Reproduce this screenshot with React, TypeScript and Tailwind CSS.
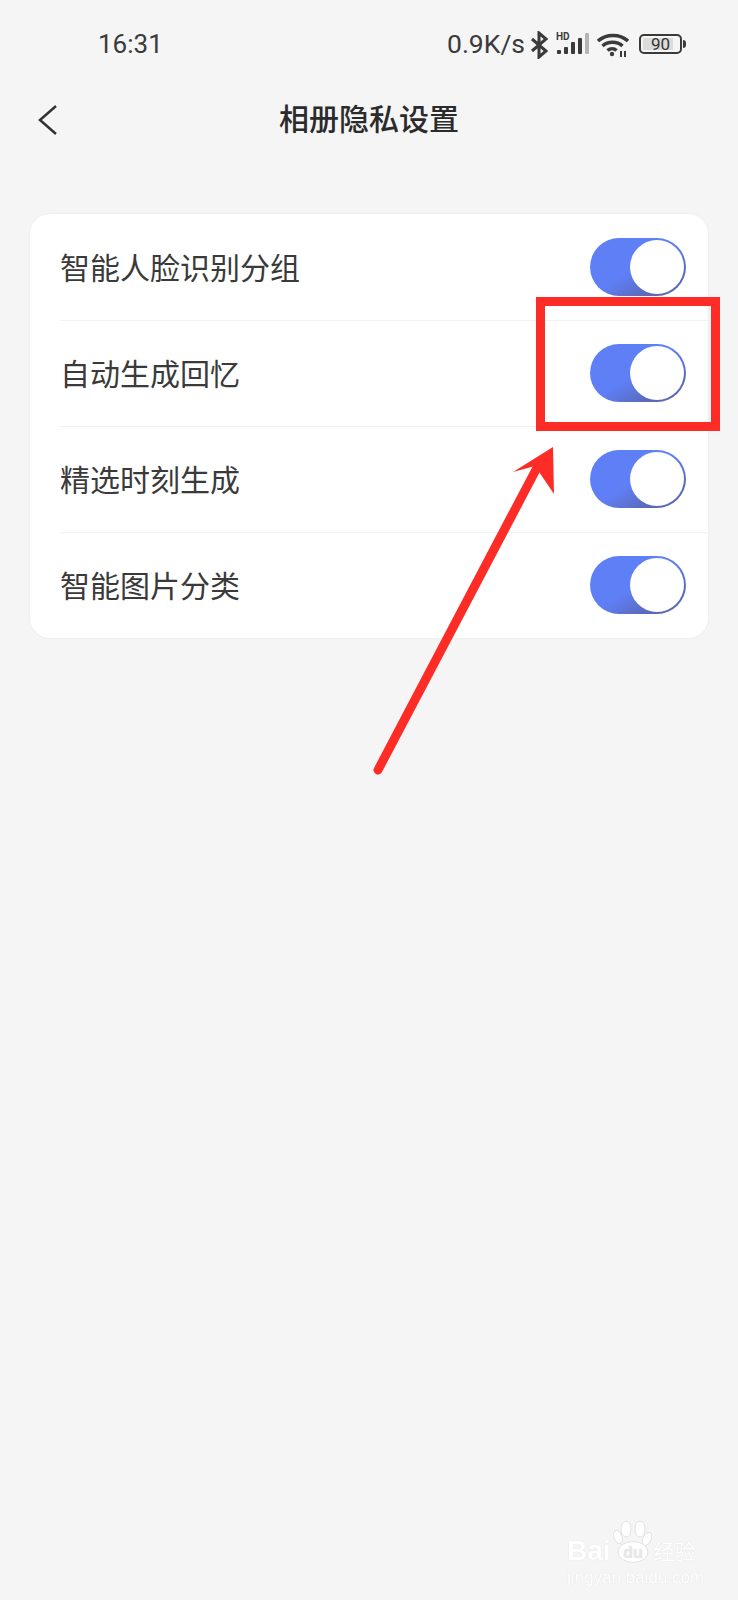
function StatusIcons() {
  return (
    <div className="flex items-center">
      <svg width="18" height="28" viewBox="0 0 18 28" fill="none" stroke="#3a3a3a" strokeWidth="3" className="ml-[5px] mt-[2px]">
        <path d="M2 8l14 12-7 6V2l7 6L2 20" />
      </svg>
      <svg width="33" height="24" viewBox="0 0 33 24" className="ml-[8px]" fill="#3a3a3a">
        <text x="0" y="8" fontSize="10" fontWeight="700" fontFamily="Roboto, sans-serif">HD</text>
        <rect x="1" y="18" width="4" height="4" rx="1" />
        <rect x="8" y="15" width="4" height="7" rx="1" />
        <rect x="15" y="10" width="4" height="12" rx="1" />
        <rect x="22" y="6" width="4" height="16" rx="1" />
        <rect x="29" y="1" width="4" height="21" rx="1" fill="#b5b5b5" />
      </svg>
      <svg width="32" height="24" viewBox="0 0 32 24" className="ml-[8px] mt-[2px]" fill="none" stroke="#3a3a3a" strokeWidth="3.5">
        <path d="M1 8C9 0.500 23 0.500 31 8" />
        <path d="M5.500 13C11 8 20 8 25.500 13" />
        <path d="M10.500 17.500c2.800-2.500 6.500-2.500 9 0" />
        <circle cx="15" cy="21" r="2.200" fill="#3a3a3a" stroke="none" />
        <path d="M24 18v6M28 18v6" strokeWidth="2" />
      </svg>
      <div className="ml-[10px] flex items-center">
        <div className="flex h-[20px] w-[43px] items-center rounded-[5px] border-2 border-[#3a3a3a] p-[2px]">
          <div className="flex h-full w-[30px] items-center justify-center bg-[#dcdcdc] pl-[5px] text-[17px] leading-none text-[#333]">90</div>
        </div>
        <div className="ml-[1px] h-[8px] w-[3px] rounded-r bg-[#3a3a3a]" />
      </div>
    </div>
  );
}

function Toggle() {
  return (
    <div className="mb-[1px] flex h-[58px] w-[96px] items-center justify-end rounded-full bg-gradient-to-br from-[#5f7ff7] from-50% to-[#5a69b8] to-80% pr-[2px]">
      <div className="h-[54px] w-[54px] rounded-full bg-white" />
    </div>
  );
}

function Row({ label, first }: { label: string; first?: boolean }) {
  return (
    <div className="ml-[30px] flex h-[106px] items-center justify-between border-t pr-[22px] text-[30px] text-[#3a3a3a]" style={{ borderColor: first ? 'transparent' : '#f1f1f1' }}>
      <span className="mb-[2px]">{label}</span>
      <Toggle />
    </div>
  );
}

function Watermark() {
  return (
    <div className="absolute left-[567px] top-[1520px] w-[135px] text-white [font-family:'Liberation_Sans',sans-serif] [text-shadow:0_0_1px_#d8d8d8]">
      <div className="flex h-[43px] items-end">
        <span className="text-[28px] font-bold leading-[24px]">Bai</span>
        <svg width="39" height="43" viewBox="0 0 39 43" className="ml-[2px]" fill="#fff" stroke="#e2e2e2" strokeWidth="1">
          <ellipse cx="13" cy="9" rx="5" ry="8" />
          <ellipse cx="27" cy="9" rx="5" ry="8" />
          <ellipse cx="5" cy="17" rx="4" ry="7" transform="rotate(-20 5 17)" />
          <ellipse cx="34" cy="19" rx="4" ry="7" transform="rotate(25 34 19)" />
          <ellipse cx="20" cy="32" rx="15" ry="10.500" />
          <text x="20" y="38" textAnchor="middle" fontSize="16" fontWeight="700" fontFamily="Liberation Sans, sans-serif" fill="#e8e8e8" stroke="none">du</text>
        </svg>
        <span className="ml-[2px] text-[21px] leading-[26px] [font-family:'Noto_Sans_CJK_SC',sans-serif]">经验</span>
      </div>
      <div className="mt-[6px] whitespace-nowrap text-[17px] leading-none">jingyan.baidu.com</div>
    </div>
  );
}

export default function App() {
  const rows = ['智能人脸识别分组', '自动生成回忆', '精选时刻生成', '智能图片分类'];
  return (
    <div className="relative h-[1600px] w-[738px] overflow-hidden bg-[#f5f5f5] [font-family:'Noto_Sans_CJK_SC',sans-serif]">
      <div className="flex h-[88px] items-center justify-between pl-[98px] pr-[52px] text-[26px] text-[#3a3a3a] [font-family:Roboto,sans-serif]">
        <span>16:31</span>
        <div className="flex items-center">
          <span className="text-[26.5px]">0.9K/s</span>
          <StatusIcons />
        </div>
      </div>
      <div className="relative flex h-[62px] items-center justify-center pb-[4px] text-[30px] font-medium text-[#2b2b2b]">
        <svg width="20" height="32" viewBox="0 0 20 32" fill="none" stroke="#333" strokeWidth="2.500" className="absolute left-[38px] top-[16px]">
          <path d="M18 2L2 16l16 14" />
        </svg>
        相册隐私设置
      </div>
      <div className="mx-[30px] mt-[64px] overflow-hidden rounded-[20px] bg-white shadow-[0_0_3px_rgba(0,0,0,0.06)]">
        {rows.map((r, i) => (
          <Row key={r} label={r} first={i === 0} />
        ))}
      </div>
      <div className="absolute left-[536px] top-[297px] h-[134px] w-[184px] border-[9px] border-[#fd2c26]" />
      <svg className="absolute left-0 top-0" width="738" height="1600" fill="none">
        <path d="M378 770L540 462" stroke="#fd2c26" strokeWidth="9" strokeLinecap="round" />
        <path d="M553 447L513 472L535 466L554 494Z" fill="#fd2c26" />
      </svg>
      <Watermark />
    </div>
  );
}
